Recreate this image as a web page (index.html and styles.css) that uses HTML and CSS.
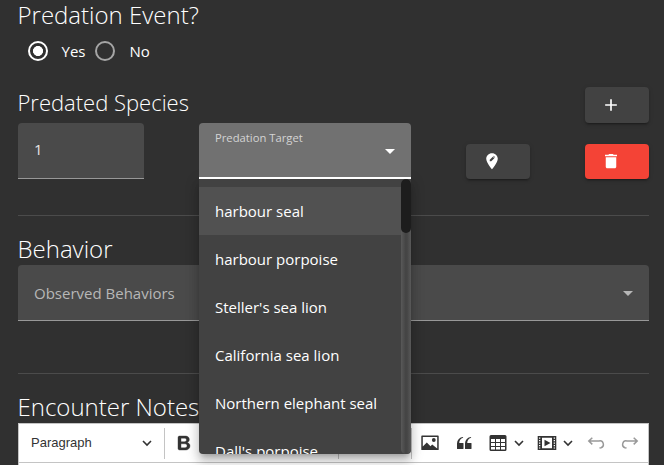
FILE: index.html
```html
<!DOCTYPE html>
<html lang="en">
<head>
<meta charset="utf-8">
<title>Encounter</title>
<link rel="stylesheet" href="styles.css">
</head>
<body>
<main class="form">
  <section class="predation">
    <h2>Predation Event?</h2>
    <div class="radios">
      <label class="radio on"><i></i><span>Yes</span></label>
      <label class="radio"><i></i><span>No</span></label>
    </div>
  </section>
  <section class="species">
    <header class="species-head">
      <h2>Predated Species</h2>
      <button class="btn"><svg width="20" height="20" viewBox="0 0 24 24"><path d="M19 13h-6v6h-2v-6H5v-2h6V5h2v6h6v2z"/></svg></button>
    </header>
    <div class="species-row">
      <div class="field count">1</div>
      <div class="select">
        <div class="field active"><span class="float">Predation Target</span><i class="caret"></i></div>
        <div class="menu">
          <ul>
            <li class="current">harbour seal</li>
            <li>harbour porpoise</li>
            <li>Steller's sea lion</li>
            <li>California sea lion</li>
            <li>Northern elephant seal</li>
            <li>Dall's porpoise</li>
          </ul>
          <div class="track"><div class="thumb"></div></div>
        </div>
      </div>
      <button class="btn locate"><svg width="18" height="18" viewBox="0 0 24 24"><path fill-rule="evenodd" d="M12 1.500C7.600 1.500 4.300 4.900 4.300 9c0 5.250 7.700 14 7.700 14s7.700-8.750 7.700-14c0-4.100-3.300-7.500-7.700-7.500zm-3 10.800v-2l4.100-4.100 2 2-4.100 4.100H9zm6.600-4.600l-2-2 .6-.6 2 2z"/></svg></button>
      <button class="btn danger"><svg width="18" height="18" viewBox="0 0 24 24"><path d="M5 19.500c0 1.100.9 2 2 2h10c1.100 0 2-.9 2-2V7H5v12.500zM20 3.500h-4.500l-1-1h-5l-1 1H4v2h16v-2z"/></svg></button>
    </div>
  </section>
  <section class="behavior">
    <h2>Behavior</h2>
    <div class="field observed"><span>Observed Behaviors</span><i class="caret dim"></i></div>
  </section>
  <section class="notes">
    <h2>Encounter Notes</h2>
    <div class="editor">
      <div class="toolbar">
        <div class="paragraph"><span>Paragraph</span><svg class="chev" width="10" height="10" viewBox="0 0 10 10"><path d="M1 3l4 4 4-4"/></svg></div>
        <i class="sep"></i>
        <svg class="bold" width="20" height="20" viewBox="0 0 20 20"><path stroke="currentColor" stroke-width=".4" d="M10.187 17H5.773c-.637 0-1.092-.138-1.364-.415-.273-.277-.409-.718-.409-1.323V4.738c0-.617.140-1.062.419-1.332.279-.27.730-.406 1.354-.406h4.680c.690 0 1.288.041 1.793.124.506.083.960.242 1.360.477.341.197.644.447.906.750a3.262 3.262 0 0 1 .808 2.162c0 1.401-.722 2.426-2.167 3.075C15.050 10.175 16 11.315 16 13.010a3.756 3.756 0 0 1-2.296 3.504 6.100 6.100 0 0 1-1.517.377c-.571.073-1.238.110-2 .110zm-.217-6.217H7v4.087h3.069c1.977 0 2.965-.690 2.965-2.072 0-.707-.256-1.220-.768-1.537-.512-.319-1.277-.478-2.296-.478zM7 5.130v3.619h2.606c.729 0 1.292-.067 1.690-.200a1.600 1.600 0 0 0 .910-.765c.165-.267.247-.566.247-.897 0-.707-.260-1.176-.778-1.409-.519-.232-1.310-.348-2.375-.348H7z"/></svg>
        <i class="sep early"></i>
        <i class="sep late"></i>
        <svg class="image" width="20" height="20" viewBox="0 0 20 20"><path fill-rule="evenodd" d="M2 2.500h16q.7 0 .7.700v13.200q0 .7-.7.700H2q-.7 0-.7-.7V3.200q0-.7.700-.7zm.800 1.500v9.500l4-4 3.700 3.700 1.700-1.600 5 4V4zm11 1.100a1.900 1.900 0 1 1 0 3.800 1.900 1.900 0 0 1 0-3.800z"/></svg>
        <svg class="quote" width="20" height="20" viewBox="0 0 20 20"><path d="M3 10.423a6.500 6.500 0 0 1 6.056-6.408l.038.670C6.448 5.423 5.354 7.663 5.220 10H9c.552 0 .5.432.5.986v4.511c0 .554-.448.503-1 .503h-5c-.552 0-.5-.449-.5-1.003v-4.574zm8 0a6.500 6.500 0 0 1 6.056-6.408l.038.670c-2.646.739-3.740 2.979-3.873 5.315H17c.552 0 .5.432.5.986v4.511c0 .554-.448.503-1 .503h-5c-.552 0-.5-.449-.5-1.003v-4.574z"/></svg>
        <svg class="table" width="20" height="20" viewBox="0 0 20 20"><path fill-rule="evenodd" d="M3 2h14q1.500 0 1.500 1.500v13q0 1.500-1.500 1.500H3q-1.500 0-1.500-1.500v-13Q1.500 2 3 2zm0 4v3h4V6zm5 0v3h4V6zm5 0v3h4V6zM3 10v3h4v-3zm5 0v3h4v-3zm5 0v3h4v-3zM3 14v2.500h4V14zm5 0v2.500h4V14zm5 0v2.500h4V14z"/></svg>
        <svg class="chev table-chev" width="10" height="10" viewBox="0 0 10 10"><path d="M1 3l4 4 4-4"/></svg>
        <svg class="media" width="20" height="20" viewBox="0 0 20 20"><path fill-rule="evenodd" d="M.7 3h18.600v14H.7zM5 4.700v10.600h10V4.700zM7.500 6.700l6 3.300-6 3.300zM2 4.500v1.200h1.300V4.500zm0 2.500v1.200h1.300V7zm0 2.500v1.200h1.300V9.500zM2 12v1.200h1.300V12zm0 2.400v1.200h1.300v-1.200zM16.700 4.500v1.200H18V4.500zm0 2.500v1.200H18V7zm0 2.500v1.200H18V9.500zm0 2.500v1.200H18V12zm0 2.400v1.200H18v-1.200z"/></svg>
        <svg class="chev media-chev" width="10" height="10" viewBox="0 0 10 10"><path d="M1 3l4 4 4-4"/></svg>
        <svg class="history undo" width="20" height="20" viewBox="0 0 20 20"><path d="M6.300 4.700L2.800 8l3.500 3.400M3 8h10a3.500 3.500 0 0 1 2 6.700l-1.500.3"/></svg>
        <svg class="history redo" width="20" height="20" viewBox="0 0 20 20"><path d="M13.700 4.700L17.200 8l-3.500 3.400M17 8H7a3.500 3.500 0 0 0-2 6.700l1.500.3"/></svg>
      </div>
    </div>
  </section>
</main>
</body>
</html>
```
FILE: styles.css
```css
* { box-sizing: border-box; }
body {
  margin: 0;
  height: 465px;
  overflow: hidden;
  background: #303030;
  color: #fff;
  font: 15px/24px "Open Sans", "Noto Sans", sans-serif;
}
.form { padding: 0 15px 0 18px; }
h2 { margin: 0 0 0 -0.500px; font-size: 24px; font-weight: 300; line-height: 32px; white-space: nowrap; }
i { display: block; flex: none; }
svg { display: block; flex: none; fill: currentColor; }

.predation { height: 87px; }
.predation h2 { height: 31px; line-height: 30px; }
.radios { display: flex; padding: 10px 0 0 10px; }
.radio { display: flex; align-items: center; height: 20px; width: 67px; }
.radio i { width: 20px; height: 20px; margin-right: 13.500px; border: 2px solid #a5a5a5; border-radius: 50%; }
.radio.on i { border-color: #fff; background: radial-gradient(circle, #fff 4.700px, transparent 5.300px); }
.radio:last-child i { margin-right: 14.500px; }

.species { height: 129px; border-bottom: 1px solid #4b4b4b; }
.species-head { display: flex; justify-content: space-between; height: 36px; }
.species-head h2 { font-size: 22px; line-height: 30px; }
.btn {
  display: flex; align-items: center; width: 64px; height: 36px; padding: 0 0 0 16px;
  border: 0; border-radius: 4px; background: #424242; color: #fff;
  box-shadow: 0 3px 1px -2px rgba(0,0,0,.2), 0 2px 2px rgba(0,0,0,.14), 0 1px 5px rgba(0,0,0,.12);
}
.species-row { display: flex; }
.species-row .btn { height: 35px; margin-top: 21px; padding: 0 0 1px 17px; }
.locate { margin-left: 55px; }
.danger { margin-left: 55px; }
.danger.btn { background: #f44336; }
.field {
  display: flex; align-items: center; height: 56px; padding: 0 16px;
  border-radius: 4px 4px 0 0; border-bottom: 1px solid #989898; background: #4a4a4a;
}
.count { width: 126px; margin-right: 55px; padding-bottom: 3px; color: #e5e5e5; }
.select { position: relative; width: 212px; }
.active { position: relative; z-index: 3; align-items: flex-start; justify-content: space-between; border-bottom: 2px solid #fff; background: #717171; }
.float { padding-top: 5px; font-size: 11.250px; line-height: 20px; color: #d4d4d4; }
.caret { border: 5px solid transparent; border-top-color: #fff; border-bottom: 0; }
.active .caret { margin-top: 26px; }
.caret.dim { margin-top: 2px; border-top-color: #b7b7b7; }
.menu {
  position: absolute; z-index: 2; top: 56px; left: 0; display: flex;
  width: 212px; height: 275px; background: #424242; border-radius: 0 0 4px 4px;
  box-shadow: 0 5px 5px -3px rgba(0,0,0,.2), 0 8px 10px 1px rgba(0,0,0,.14), 0 3px 14px 2px rgba(0,0,0,.12);
}
.menu ul { flex: 1; margin: 0; padding: 8px 0 0; overflow: hidden; list-style: none; }
.menu li { height: 48px; padding: 0 16px; line-height: 48px; white-space: nowrap; }
.menu .current { background: #515151; }
.track { width: 10px; border-radius: 5px; background: linear-gradient(90deg, #595959, #454545 45%, #454545 60%, #595959); }
.thumb { height: 54px; border-radius: 5px; background: #1d1d1d; }

.behavior { height: 158px; padding-top: 17px; border-bottom: 1px solid #4b4b4b; }
.observed { justify-content: space-between; color: #b7b7b7; }
.notes { padding-top: 17px; }
.editor { height: 60px; border: 1px solid #c4c4c4; background: #fff; color: #333; }
.toolbar { display: flex; align-items: center; height: 39px; border-bottom: 1px solid #c4c4c4; }
.paragraph { display: flex; align-items: center; justify-content: space-between; width: 145px; padding: 0 12px; font: 13px/20px "Liberation Sans", sans-serif; }
.chev { fill: none; stroke: currentColor; stroke-width: 1.600; }
.sep { width: 1px; height: 31px; background: #c4c4c4; }
.bold { margin-left: 9px; }
.early { margin-left: 144px; }
.late { margin-left: 72px; }
.image { margin-left: 8px; }
.quote { margin-left: 14px; }
.table { margin-left: 14px; }
.table-chev { margin-left: 6px; }
.media { margin-left: 13px; }
.media-chev { margin-left: 6px; }
.history { fill: none; stroke: #999; stroke-width: 1.500; }
.undo { margin-left: 13px; }
.redo { margin-left: 14px; }
```
